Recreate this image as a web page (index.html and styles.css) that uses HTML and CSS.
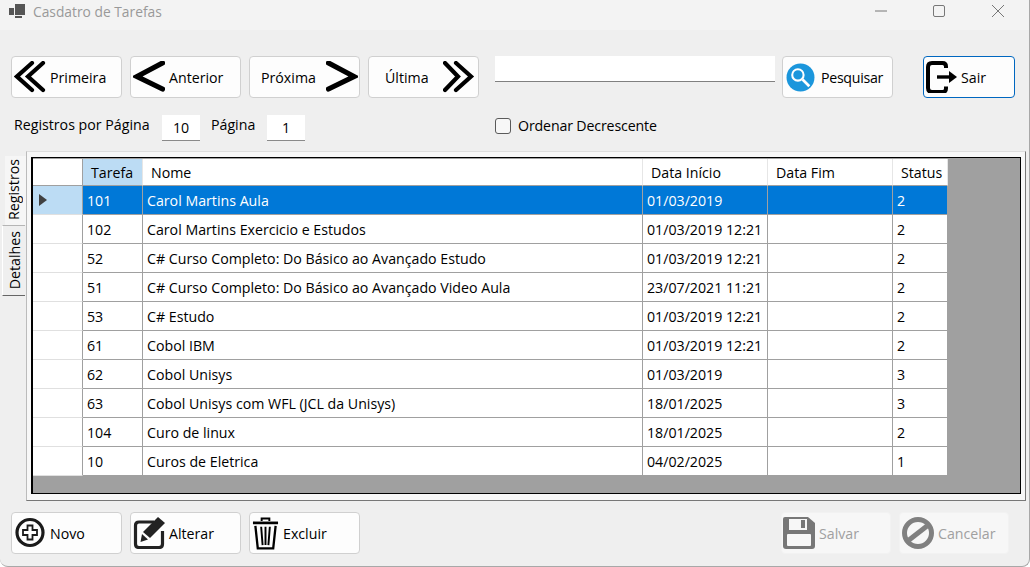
FILE: index.html
```html
<!DOCTYPE html>
<html lang="pt">
<head>
<meta charset="utf-8">
<title>Casdatro de Tarefas</title>
<link rel="stylesheet" href="styles.css">
</head>
<body>
<div class="window">
  <header class="titlebar">
    <svg class="app-icon" viewBox="0 0 16 14"><path d="M6 0h10v11H6zM0 4h5v7H0zM6 12h7v2H6z" fill="#555"/></svg>
    <span class="title">Casdatro de Tarefas</span>
    <div class="controls">
      <svg class="ctl" viewBox="0 0 58 14"><path d="M0 7h12" stroke="#777" fill="none"/></svg>
      <svg class="ctl" viewBox="0 0 58 14"><rect x="0.5" y="1.5" width="11" height="11" rx="1.5" stroke="#777" fill="none"/></svg>
      <svg class="ctl ctl-last" viewBox="0 0 14 14"><path d="M1 1l12 12M13 1L1 13" stroke="#777" fill="none"/></svg>
    </div>
  </header>

  <div class="toolbar">
    <button class="btn"><svg class="icon" viewBox="0 0 32 32"><path d="M18 2L3 15.500 18 29M29 2L14 15.500 29 29" fill="none" stroke="#000" stroke-width="4.200" stroke-linecap="round"/></svg>Primeira</button>
    <button class="btn"><svg class="icon" viewBox="0 0 32 32"><path d="M29.500 2L4 15.500 29.500 28" fill="none" stroke="#000" stroke-width="5.200" stroke-linecap="round"/></svg>Anterior</button>
    <button class="btn btn-next">Próxima<svg class="icon icon-end" viewBox="0 0 32 32"><path d="M2.500 2L28 15.500 2.500 28" fill="none" stroke="#000" stroke-width="5.200" stroke-linecap="round"/></svg></button>
    <button class="btn btn-last">Última<svg class="icon icon-end" viewBox="0 0 32 32"><path d="M2 2L15 15.500 2 29M13 2L28 15.500 13 29" fill="none" stroke="#000" stroke-width="4.200" stroke-linecap="round"/></svg></button>
    <input class="search" type="text">
    <button class="btn btn-search"><svg class="icon icon-search" viewBox="0 0 28 28"><circle cx="14" cy="14" r="13.500" fill="#1b96dc"/><circle cx="11.500" cy="11.500" r="5.500" fill="none" stroke="#fff" stroke-width="2"/><path d="M16 16l6.500 6.500" stroke="#fff" stroke-width="2.600"/></svg>Pesquisar</button>
    <button class="btn btn-exit"><svg class="icon" viewBox="0 0 32 32"><path d="M20 7V5.500Q20 2 16.500 2H6Q2 2 2 6V27Q2 31 6 31H16.500Q20 31 20 27.500V25.500" fill="none" stroke="#000" stroke-width="4"/><path d="M11 16H25" stroke="#000" stroke-width="3.400"/><path d="M23 10L31 16 23 22Z" fill="#000"/></svg>Sair</button>
  </div>

  <div class="options">
    <span class="lbl lbl-reg">Registros por Página</span>
    <span class="num">10</span>
    <span class="lbl lbl-page">Página</span>
    <span class="num">1</span>
    <span class="check"></span>
    <span class="lbl lbl-order">Ordenar Decrescente</span>
  </div>

  <div class="main">
    <div class="tabs">
      <div class="tab tab-on"><span>Registros</span></div>
      <div class="tab tab-off"><span>Detalhes</span></div>
    </div>
    <div class="panel">
      <div class="grid">
        <table class="table">
          <colgroup><col class="c0"><col class="c1"><col class="c2"><col class="c3"><col class="c3"><col class="c5"></colgroup>
          <thead>
            <tr><th class="rh"></th><th class="th-on">Tarefa</th><th>Nome</th><th>Data Início</th><th>Data Fim</th><th>Status</th></tr>
          </thead>
          <tbody>
            <tr class="sel"><td class="rh rh-on"><span class="arrow"></span></td><td>101</td><td>Carol Martins Aula</td><td>01/03/2019</td><td></td><td>2</td></tr>
            <tr><td class="rh"></td><td>102</td><td>Carol Martins Exercicio e Estudos</td><td>01/03/2019 12:21</td><td></td><td>2</td></tr>
            <tr><td class="rh"></td><td>52</td><td>C# Curso Completo: Do Básico ao Avançado Estudo</td><td>01/03/2019 12:21</td><td></td><td>2</td></tr>
            <tr><td class="rh"></td><td>51</td><td>C# Curso Completo: Do Básico ao Avançado Video Aula</td><td>23/07/2021 11:21</td><td></td><td>2</td></tr>
            <tr><td class="rh"></td><td>53</td><td>C# Estudo</td><td>01/03/2019 12:21</td><td></td><td>2</td></tr>
            <tr><td class="rh"></td><td>61</td><td>Cobol IBM</td><td>01/03/2019 12:21</td><td></td><td>2</td></tr>
            <tr><td class="rh"></td><td>62</td><td>Cobol Unisys</td><td>01/03/2019</td><td></td><td>3</td></tr>
            <tr><td class="rh"></td><td>63</td><td>Cobol Unisys com WFL (JCL da Unisys)</td><td>18/01/2025</td><td></td><td>3</td></tr>
            <tr><td class="rh"></td><td>104</td><td>Curo de linux</td><td>18/01/2025</td><td></td><td>2</td></tr>
            <tr><td class="rh"></td><td>10</td><td>Curos de Eletrica</td><td>04/02/2025</td><td></td><td>1</td></tr>
          </tbody>
        </table>
      </div>
    </div>
  </div>

  <div class="actions">
    <button class="btn"><svg class="icon" viewBox="0 0 32 32"><circle cx="16" cy="15.500" r="13" fill="none" stroke="#1a1a1a" stroke-width="3.200"/><path d="M13.500 8.500h5v4.500h4.500v5h-4.500v4.500h-5V18H9v-5h4.500z" fill="none" stroke="#1a1a1a" stroke-width="1.800"/></svg>Novo</button>
    <button class="btn"><svg class="icon" viewBox="0 0 32 32"><path d="M21 5H6Q2.500 5 2.500 8.500V27Q2.500 30.500 6 30.500H26Q29.500 30.500 29.500 27V14" fill="none" stroke="#222" stroke-width="3.200"/><path d="M25 0L32 6 17 21 10 15Z" fill="#222"/><path d="M9 17L15 22.500 7.500 25Z" fill="#222"/></svg>Alterar</button>
    <button class="btn btn-trash"><svg class="icon icon-trash" viewBox="0 0 28 34"><path d="M1 6H27" stroke="#000" stroke-width="2.800"/><path d="M10 4V1.500H18V4" fill="none" stroke="#000" stroke-width="2"/><path d="M3.500 9L6 32.500H22L24.500 9" fill="none" stroke="#000" stroke-width="2.400"/><path d="M9.500 10L11 29M14 10V29M18.500 10L17 29" fill="none" stroke="#000" stroke-width="2"/></svg>Excluir</button>
    <button class="btn btn-off btn-save"><svg class="icon" viewBox="0 0 32 32"><path d="M2 0H25L32 6V29Q32 32 29 32H3Q0 32 0 29V2Q0 0 2 0Z" fill="#777"/><rect x="4" y="17" width="24" height="12" rx="1" fill="#f7f7f7"/><rect x="6" y="2" width="18" height="11" fill="#f7f7f7"/><rect x="18" y="3" width="4" height="8" fill="#777"/></svg>Salvar</button>
    <button class="btn btn-off"><svg class="icon" viewBox="0 0 32 32"><circle cx="16" cy="16" r="13.500" fill="none" stroke="#808080" stroke-width="5"/><path d="M7 23L25 9" stroke="#808080" stroke-width="5"/></svg>Cancelar</button>
  </div>
</div>
</body>
</html>
```

FILE: styles.css
```css
* {
  box-sizing: border-box;
}

html,
body {
  margin: 0;
  padding: 0;
  background: #fff;
}

body {
  font-family: "Open Sans", "Noto Sans", "Liberation Sans", sans-serif;
  font-size: 14.2px;
  color: #000;
}

.window {
  width: 1030px;
  height: 567px;
  background: #efefef;
  border-right: 1px solid #a8a8a8;
  border-bottom: 1px solid #a8a8a8;
  border-bottom-right-radius: 8px;
  border-bottom-left-radius: 8px;
  overflow: hidden;
}

.titlebar {
  height: 30px;
  display: flex;
  align-items: center;
  background: #f3f3f3;
  padding: 0 24px 8px 9px;
}

.app-icon {
  width: 16px;
  height: 14px;
  flex: none;
}

.title {
  margin-left: 8px;
  font-size: 13.8px;
  color: #999;
}

.controls {
  margin-left: auto;
  display: flex;
  align-items: center;
}

.ctl {
  width: 58px;
  height: 14px;
}

.ctl-last {
  width: 14px;
}

.toolbar {
  display: flex;
  margin-top: 26px;
  padding-left: 11px;
  gap: 8px;
  align-items: flex-start;
}

.btn {
  width: 111px;
  height: 42px;
  flex: none;
  display: flex;
  align-items: center;
  gap: 4px;
  padding: 1px 1px 0 2px;
  background: #fdfdfd;
  border: 1px solid #d0d0d0;
  border-radius: 4px;
  font: inherit;
  color: #000;
}

.icon {
  width: 32px;
  height: 32px;
  flex: none;
  margin-bottom: 1px;
}

.icon-end {
  margin-left: auto;
}

.icon-search {
  width: 29px;
  height: 29px;
}

.icon-trash {
  width: 27px;
  height: 33px;
}

.btn-next {
  padding-left: 11px;
}

.btn-last {
  padding-left: 16px;
  padding-right: 3px;
}

.search {
  width: 280px;
  height: 26px;
  flex: none;
  margin-left: 8px;
  margin-right: -1px;
  background: #fff;
  border: 0;
  border-bottom: 1px solid #808080;
}

.btn-search {
  padding-left: 3px;
  gap: 6px;
  letter-spacing: -0.3px;
}

.btn-exit {
  width: 92px;
  margin-left: 22px;
  gap: 3px;
  border-color: #0067c0;
}

.options {
  display: flex;
  align-items: center;
  height: 26px;
  margin-top: 17px;
  padding-left: 14px;
}

.lbl {
  padding-bottom: 8px;
}

.lbl-order {
  padding-bottom: 6px;
  letter-spacing: -0.15px;
}

.lbl-reg {
  width: 148px;
}

.lbl-page {
  width: 56px;
  margin-left: 11px;
}

.num {
  width: 38px;
  height: 26px;
  line-height: 26px;
  text-align: center;
  background: #fff;
  border-bottom: 1px solid #8a8a8a;
}

.check {
  width: 16px;
  height: 16px;
  margin: 0 7px 4px 190px;
  background: #f7f7f7;
  border: 1px solid #5a5a5a;
  border-radius: 3px;
}

.main {
  display: flex;
  height: 350px;
  margin-top: 10px;
  padding-left: 1px;
}

.tabs {
  width: 25px;
  flex: none;
  padding-top: 5px;
}

.tab {
  display: flex;
  justify-content: center;
  align-items: center;
}

.tab span {
  writing-mode: vertical-rl;
  transform: rotate(180deg);
}

.tab-on {
  height: 69px;
  margin-left: 4px;
  padding: 0 5px 3px 0;
  background: #f6f6f6;
}

.tab-off {
  height: 71px;
  margin-left: 1px;
  margin-right: 1px;
  background: #efefef;
  border-top: 1px solid #b5b5b5;
  border-left: 1px solid #fff;
  border-bottom: 1px solid #666;
}

.panel {
  width: 1000px;
  flex: none;
  padding: 5px 4px 6px 4px;
  background: #f7f7f7;
  border-top: 1px solid #ddd;
  border-left: 1px solid #bbb;
  border-right: 1px solid #777;
  border-bottom: 1px solid #777;
}

.grid {
  height: 100%;
  padding: 1px 1px 1px 0;
  background: #a0a0a0;
  border: 1px solid #000;
  border-left-width: 2px;
}

.table {
  width: 915px;
  table-layout: fixed;
  border-collapse: separate;
  border-spacing: 0;
}

.c0 { width: 50px; }
.c1 { width: 60px; }
.c2 { width: 500px; }
.c3 { width: 125px; }
.c5 { width: 55px; }

th {
  height: 27px;
  padding: 0 0 0 8px;
  text-align: left;
  font-weight: 400;
  background: #fff;
  border-right: 1px solid #e6e6e6;
  border-bottom: 1px solid #a0a0a0;
}

td {
  height: 29px;
  padding: 0 0 0 4px;
  background: #fff;
  white-space: nowrap;
  overflow: hidden;
  border-right: 1px solid #a0a0a0;
  border-bottom: 1px solid #a0a0a0;
}

.th-on {
  background: #bcdcf4;
}

.rh {
  border-right: 1px solid #a0a0a0;
  border-bottom: 1px solid #e0e0e0;
}

th.rh {
  border-bottom-color: #a0a0a0;
}

.rh-on {
  background: #bcdcf4;
}

.sel td {
  background: #0078d7;
  color: #fff;
}

.sel td.rh-on {
  background: #bcdcf4;
}

.arrow {
  display: block;
  width: 0;
  height: 0;
  margin-left: 2px;
  border-left: 8px solid #404040;
  border-top: 6px solid transparent;
  border-bottom: 6px solid transparent;
}

.actions {
  display: flex;
  gap: 8px;
  margin-top: 11px;
  padding: 0 20px 0 11px;
}

.btn-trash {
  gap: 4px;
}

.btn-off {
  width: 110px;
  background: #f7f7f7;
  border-color: #f2f2f2;
  color: #a0a0a0;
}

.btn-save {
  margin-left: auto;
  margin-right: 0;
  padding-left: 1px;
}
```
